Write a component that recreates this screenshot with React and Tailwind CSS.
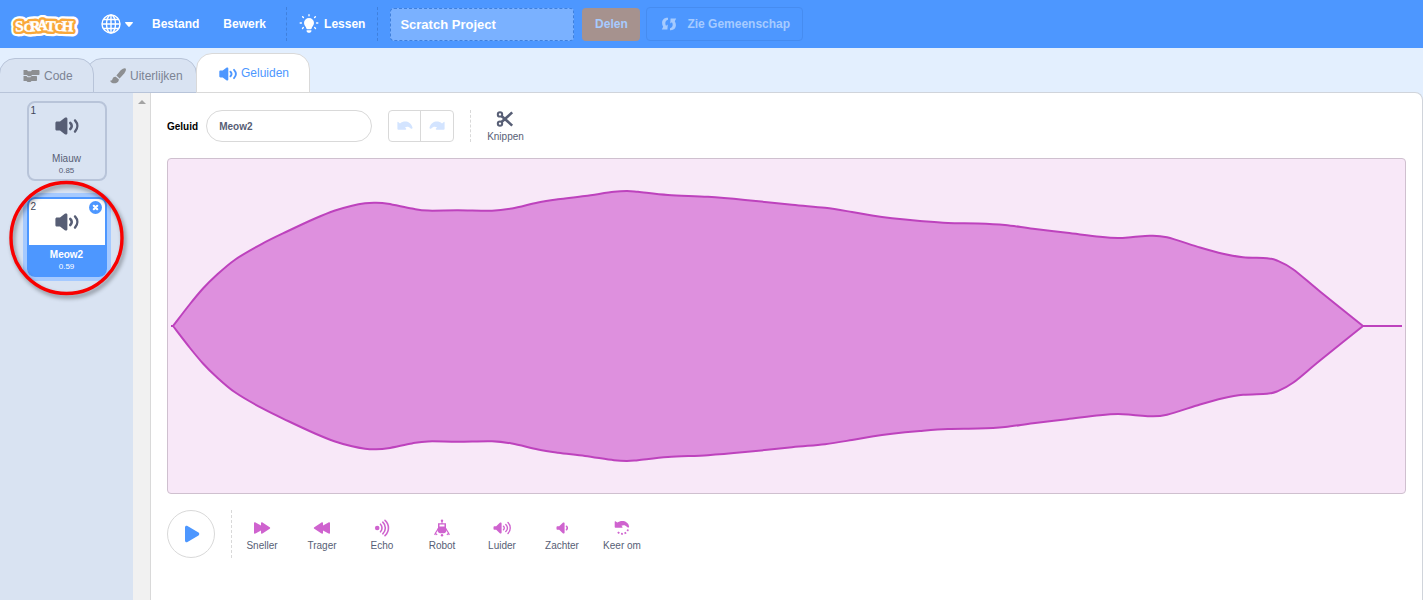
import React from "react";

function Speaker({ className }) {
  return (
    <svg viewBox="0 0 24 18" className={className} fill="currentColor" aria-hidden="true">
      <path d="M2 4.400h3L9.800.8C11 0 12.400.4 12.400 1.800v14.400c0 1.400-1.400 1.800-2.600 1L5 13.600H2c-1 0-1.600-.6-1.600-1.600V6c0-1 .6-1.600 1.600-1.600z" />
      <path d="M15.300 6c1.900 1.800 1.900 4.200 0 6" fill="none" stroke="currentColor" strokeWidth="2.600" strokeLinecap="round" />
      <path d="M20 3.400c3.100 3.400 3.100 7.800 0 11.200" fill="none" stroke="currentColor" strokeWidth="2.400" strokeLinecap="round" />
    </svg>
  );
}

const CONE = "M1.600 5.200h1.600l3.600-3.400C7.500 1.100 8.600 1.400 8.600 2.400v9.200c0 1-1.100 1.300-1.800.6L3.200 8.800H1.600C.9 8.800.5 8.400.5 7.700V6.300c0-.7.4-1.100 1.100-1.100z";

function LouderIcon() {
  return (
    <svg viewBox="0 0 18 14" className="h-3.5 w-[18px]" fill="currentColor" aria-hidden="true">
      <path d={CONE} />
      <path d="M10.500 5.200c1 1 1 2.600 0 3.600M12.800 3.400c2.200 2 2.200 5.200 0 7.200M15 1.600c3 3 3 7.800 0 10.800" fill="none" stroke="currentColor" strokeWidth="1.400" strokeLinecap="round" />
    </svg>
  );
}

function SofterIcon() {
  return (
    <svg viewBox="0 0 12 14" className="h-3.5 w-3" fill="currentColor" aria-hidden="true">
      <path d={CONE} />
      <path d="M10.500 5.300c.9 1 .9 2.400 0 3.400" fill="none" stroke="currentColor" strokeWidth="1.600" strokeLinecap="round" />
    </svg>
  );
}

const logoLetters = [
  ["S", 6.5, 22, 15, -4],
  ["C", 14.5, 21.5, 12, 4],
  ["R", 21, 22, 15, -4],
  ["A", 28.5, 20, 14, 0],
  ["T", 36.5, 21.5, 15, 2],
  ["C", 46, 21.5, 12, -2],
  ["H", 52.5, 21.5, 15, 2],
];

function LogoLayer(props) {
  return (
    <g strokeLinejoin="round" fontFamily="'Liberation Serif', serif" {...props}>
      {logoLetters.map(([letter, x, y, size, angle], i) => (
        <text key={i} x={x} y={y} fontSize={size} transform={`rotate(${angle} ${x} ${y})`}>{letter}</text>
      ))}
    </g>
  );
}

function Logo() {
  return (
    <svg viewBox="0 0 72 34" className="h-[34px] w-[72px]" role="img" aria-label="Scratch">
      <g transform="translate(0 2.500)">
        <LogoLayer fill="#fff" stroke="#fff" strokeWidth="10" />
        <LogoLayer fill="#f9a83a" stroke="#f9a83a" strokeWidth="5.400" />
        <LogoLayer fill="#fff" stroke="#fff" strokeWidth=".5" />
      </g>
    </svg>
  );
}

function Globe() {
  return (
    <svg viewBox="0 0 20 20" className="size-5" fill="none" stroke="#fff" strokeWidth="1.400" aria-hidden="true">
      <circle cx="10" cy="10" r="9" />
      <ellipse cx="10" cy="10" rx="4.500" ry="9" />
      <path d="M10 1v18M1 10h18M2.500 5.500h15M2.500 14.500h15" />
    </svg>
  );
}

function Bulb() {
  return (
    <svg viewBox="0 0 20 20" className="size-5" fill="#fff" aria-hidden="true">
      <path d="M10 4a5 5 0 0 0-5 5c0 2.400 2 3.500 2.400 5.400.1.500.4.8.8.8h3.600c.4 0 .7-.3.8-.8C13 12.500 15 11.400 15 9a5 5 0 0 0-5-5zM7.600 16.200h4.800v.8c0 1-1 1.800-2.400 1.800S7.600 18 7.600 17z" />
      <path d="M10 .8v1M1.200 9h1.200M17.600 9h1.200M3.600 2.800l.8.800M16.400 2.800l-.8.800M3.500 14.400l.8-.8M16.500 14.400l-.8-.8" stroke="#fff" strokeWidth="1.400" strokeLinecap="round" />
    </svg>
  );
}

function CommunityIcon() {
  return (
    <svg viewBox="0 0 16 14" className="h-3.5 w-4" fill="currentColor" aria-hidden="true">
      <path d="M7 .8C2 .2-.5 5 2.200 9.800L.8 12.600h5.600l.4-5-1.800 1.200C3.600 6.400 4.400 3.400 7 2.800z" />
      <path d="M9 13.200c5 .6 7.500-4.200 4.800-9L15.200 1.400H9.600l-.4 5L11 5.200c1.400 2.400.6 5.400-2 6z" />
    </svg>
  );
}

function CodeIcon() {
  return (
    <svg viewBox="0 0 17 13" className="h-[13px] w-[17px]" fill="#8d8f92" aria-hidden="true">
      <path d="M.5 1h3.500l1 1.200h3L9 1h6.500c.6 0 1 .4 1 1v3c0 .6-.4 1-1 1H9L8 7.200H5L4 6H.5zM.5 7h3l1 1.200h3L8.500 7H13c.6 0 1 .4 1 1v3c0 .6-.4 1-1 1H8.500l-1 1h-3l-1-1h-3z" />
    </svg>
  );
}

function BrushIcon() {
  return (
    <svg viewBox="0 0 16 16" className="size-4" fill="#8d8f92" aria-hidden="true">
      <path d="M15.500.5c-.9-.7-2.800.1-4.800 1.800L6.400 7.600l3.200 3 4.800-5.400c1.500-2 2-4 1.100-4.700zM5.700 8.700c-1.500-.2-2.700.6-3.100 2-.3 1.100-1 2.100-2.600 2 .9 2 3.200 3 5.400 2.500 2.200-.4 3.600-2 3.400-3.900z" />
    </svg>
  );
}

function UndoIcon({ flip }) {
  return (
    <svg viewBox="0 0 16 10" className={flip ? "h-2.5 w-4 -scale-x-100" : "h-2.5 w-4"} fill="#d3e4ff" aria-hidden="true">
      <path d="M1.200 1l1.800 1.400C7-.7 13.500 0 15.500 6.400c.3 1-1 1.800-1.800 1C12 5.600 10 5.300 8 6.300l1 1.200c.5.500.2 1.200-.5 1.200H1.400C.8 8.700.4 8.400.4 7.800V1.500C.4.900.8.700 1.200 1z" />
    </svg>
  );
}

function ScissorsIcon() {
  return (
    <svg viewBox="0 0 18 18" className="size-[18px]" fill="none" stroke="#575e75" aria-hidden="true">
      <circle cx="4" cy="4.400" r="2.200" strokeWidth="2" />
      <circle cx="4" cy="13.600" r="2.200" strokeWidth="2" />
      <path d="M5.800 6.200l10.400 9.400M5.800 11.800L16.200 2.400" strokeWidth="2.600" />
    </svg>
  );
}

function FasterIcon({ flip }) {
  return (
    <svg viewBox="0 0 18 18" className={flip ? "size-[18px] -scale-x-100" : "size-[18px]"} fill="currentColor" aria-hidden="true">
      <path d="M1 4.200c0-.8.800-1.200 1.500-.8L8 6.600V4.200c0-.8.800-1.200 1.500-.8l7.200 4.800c.6.400.6 1.200 0 1.600l-7.200 4.800c-.7.400-1.500 0-1.500-.8v-2.400l-5.500 3.200c-.7.400-1.500 0-1.500-.8z" />
    </svg>
  );
}

function EchoIcon() {
  return (
    <svg viewBox="0 0 18 18" className="size-[18px]" fill="none" stroke="currentColor" strokeWidth="1.600" strokeLinecap="round" aria-hidden="true">
      <circle cx="4.200" cy="9" r="2.300" fill="currentColor" stroke="none" />
      <path d="M7.500 5.200c2 2 2 5.600 0 7.600M9.800 3.200c3.400 3.200 3.400 8.400 0 11.600M12 1.400c4.600 4.200 4.600 11 0 15.200" />
    </svg>
  );
}

function RobotIcon() {
  return (
    <svg viewBox="0 0 18 18" className="size-[18px]" fill="currentColor" aria-hidden="true">
      <circle cx="9" cy="1.700" r="1.200" />
      <path d="M8.500 2h1v3h-1zM5 4.200h8V9H5zM6.500 5.600v1.800h5V5.600zM6 8.600h6c1 0 1.600.8 1.600 1.800 0 2.200-1.300 3.900-2.900 3.900H7.300c-1.600 0-2.900-1.700-2.900-3.900 0-1 .6-1.800 1.600-1.800z" />
      <path d="M5 10l-2.500 4M13 10l2.500 4M2.500 14l-.8 2M2.500 14l1.600 2M15.500 14l.8 2M15.500 14l-1.600 2" fill="none" stroke="currentColor" strokeWidth="1.200" />
      <circle cx="9" cy="16.300" r="1.200" />
    </svg>
  );
}

function ReverseIcon() {
  return (
    <svg viewBox="0 0 18 18" className="size-[18px]" fill="currentColor" aria-hidden="true">
      <path d="M2.500 2.300l1.700 1.300C8.500.4 15.300 2 16.100 7.400c.2 1.200-1.500 1.600-2.100.7-1.400-2-3.800-2.400-5.600-1.300l.9 1c.4.500.2 1-.4 1H2.500c-.5 0-.8-.3-.8-.8V2.700c0-.5.400-.7.800-.4z" />
      <path d="M15 10.500a6 5.600 0 0 1-11.200 1.200" fill="none" stroke="currentColor" strokeWidth="1.800" strokeDasharray="1.800 1.700" />
    </svg>
  );
}

/* Outline of the sound: x position and y of the upper edge; the lower edge mirrors it. */
const MIDDLE = 326;
const upperEdge = [
  [173, 326], [190, 304], [203, 288.5], [215, 276.5], [235, 259.7], [262, 243.8], [288, 231], [315, 218.5],
  [335, 210.5], [352, 205.7], [365, 203.3], [375, 202.7], [388, 203.7], [412, 208.6], [428, 210.6],
  [458, 210.3], [492, 210.8], [512, 208.5], [538, 202.5], [558, 199.3], [585, 196], [614, 191.8], [627, 191],
  [638, 191.8], [668, 195], [708, 196.8], [745, 199.9], [792, 204.8], [825, 207.8], [852, 212], [872, 215.6],
  [892, 218.3], [920, 221], [948, 223], [978, 223.4], [1005, 225], [1033, 228.8], [1067, 232.8], [1100, 236.8],
  [1118, 238], [1133, 237], [1150, 235.7], [1167, 237.3], [1200, 247.5], [1223, 253.7], [1243, 257.2],
  [1267, 258.3], [1277, 260.5], [1293, 269.2], [1320, 291.5], [1363, 326],
];

function smooth(points) {
  return points
    .slice(0, -1)
    .map((p, i) => {
      const a = points[i - 1] || p;
      const n = points[i + 1];
      const b = points[i + 2] || n;
      const k = 1 / 6;
      return `C${p[0] + (n[0] - a[0]) * k} ${p[1] + (n[1] - a[1]) * k} ${n[0] - (b[0] - p[0]) * k} ${n[1] - (b[1] - p[1]) * k} ${n[0]} ${n[1]}`;
    })
    .join("");
}

function Waveform() {
  const lowerEdge = upperEdge.map(([x, y]) => [x, 2 * MIDDLE - y]).reverse();
  return (
    <svg viewBox="168 159 1237 334" preserveAspectRatio="none" className="block h-[334px] w-full" role="img" aria-label="Golfvorm">
      <path d={`M173 326${smooth(upperEdge)}${smooth(lowerEdge)}Z`} fill="#de90de" stroke="#bd42bd" strokeWidth="2" strokeLinejoin="round" />
      <path d="M171 326h2M1363 326h39" stroke="#bd42bd" strokeWidth="2" />
    </svg>
  );
}

function Tab({ active, icon, children }) {
  return (
    <button
      type="button"
      role="tab"
      aria-selected={!!active}
      className={
        active
          ? "relative z-10 -ml-px flex h-10 w-[114px] items-center gap-1 rounded-t-[16px] border border-[#d9d9d9] bg-white pl-[22px] text-[12px] text-[#4d97ff]"
          : "flex h-[35px] items-center gap-1 rounded-t-[16px] border border-[#b8c4d9] bg-[#d9e3f2] text-[12px] text-[#7c8394] first:relative first:z-10 first:-ml-px first:w-[95px] first:pl-[23px] nth-2:-ml-2 nth-2:w-[111px] nth-2:pl-[23px]"
      }
    >
      {icon}
      {children}
    </button>
  );
}

function SoundTile({ number, name, length, selected }) {
  return (
    <button
      type="button"
      className={
        selected
          ? "relative flex h-20 w-20 flex-col items-center overflow-hidden rounded-lg border-2 border-[#4d97ff] bg-[#4d97ff] text-white"
          : "relative flex h-20 w-20 flex-col items-center overflow-hidden rounded-lg border-2 border-[#b8c4d9] text-[#575e75]"
      }
    >
      <span className={selected ? "flex h-[46px] w-full items-center justify-center bg-white text-[#575e75]" : "flex h-[46px] w-full items-center justify-center"}>
        <Speaker className="h-[18px] w-6" />
      </span>
      <span className="absolute top-[2px] left-[2px] text-[10px] leading-3 text-[#3f4559]">{number}</span>
      <span className={selected ? "mt-1 text-[10px] leading-3 font-bold" : "mt-1 text-[10px] leading-3"}>{name}</span>
      <span className="text-[8px] leading-3">{length}</span>
    </button>
  );
}

const effects = [
  ["Sneller", <FasterIcon />],
  ["Trager", <FasterIcon flip />],
  ["Echo", <EchoIcon />],
  ["Robot", <RobotIcon />],
  ["Luider", <LouderIcon />],
  ["Zachter", <SofterIcon />],
  ["Keer om", <ReverseIcon />],
];

export default function App() {
  return (
    <div className="flex min-h-screen flex-col bg-[#e3effe] font-['Liberation_Sans',Arial,sans-serif] text-[#575e75]">
      <header className="flex h-12 items-center bg-[#4d97ff] text-[12px] font-bold text-white">
        <a href="#home" className="ml-[9px]"><Logo /></a>
        <button type="button" aria-label="Taal" className="ml-5 flex items-center gap-1">
          <Globe />
          <svg viewBox="0 0 8 5" className="h-[5px] w-2" fill="#fff" aria-hidden="true"><path d="M.8 0h6.400c.8 0 1 .6.6 1.100L4.700 4.600c-.4.500-1 .500-1.400 0L.2 1.100C-.2.600 0 0 .8 0z" /></svg>
        </button>
        <button type="button" className="ml-[19px]">Bestand</button>
        <button type="button" className="ml-6">Bewerk</button>
        <div className="ml-5 flex h-[34px] items-center border-x border-dashed border-[#3f80dd] px-3">
          <button type="button" className="flex items-center gap-[5px]"><Bulb />Lessen</button>
        </div>
        <input
          aria-label="Projectnaam"
          defaultValue="Scratch Project"
          className="ml-3 h-[33px] w-[184px] rounded border border-dashed border-[#3f80dd] bg-[#7ab1ff] px-[9px] text-[13px] font-bold text-white outline-none"
        />
        <button type="button" className="ml-2 h-[33px] w-[58px] rounded bg-[#a6928e] text-[#a6cbff]">Delen</button>
        <button type="button" className="ml-[6px] flex h-[34px] w-[157px] items-center gap-[10px] rounded border border-[#468cf0] pl-[14px] text-[#a6cbff]">
          <CommunityIcon />Zie Gemeenschap
        </button>
      </header>

      <div role="tablist" className="relative z-10 -mb-px flex h-[45px] items-end">
        <Tab icon={<CodeIcon />}>Code</Tab>
        <Tab icon={<BrushIcon />}>Uiterlijken</Tab>
        <Tab active icon={<Speaker className="mt-px h-3.5 w-[18px]" />}>Geluiden</Tab>
      </div>

      <div className="flex flex-1 rounded-tr-lg border-t border-r border-[#d0d4db] bg-white">
        <aside className="relative flex w-[133px] flex-col items-center gap-4 bg-[#d9e3f2] pt-2">
          <SoundTile number="1" name="Miauw" length="0.85" />
          <div className="relative rounded-lg shadow-[0_0_0_4px_#a6caff]">
            <SoundTile number="2" name="Meow2" length="0.59" selected />
            <button type="button" aria-label="Verwijderen" className="absolute top-1 right-[5px] size-[13px] rounded-full bg-[#4d97ff]">
              <svg viewBox="0 0 13 13" className="size-[13px]" aria-hidden="true"><path d="M4.800 4.800l3.400 3.400M8.200 4.800L4.800 8.200" stroke="#fff" strokeWidth="2.200" strokeLinecap="round" /></svg>
            </button>
          </div>
          <svg viewBox="0 0 124 124" className="pointer-events-none absolute top-[86px] left-[6px] size-[124px] drop-shadow-[2px_3px_2px_#0006]" aria-hidden="true">
            <circle cx="60.500" cy="59" r="55.500" fill="none" stroke="#f80000" strokeWidth="3.400" />
          </svg>
        </aside>
        <div className="flex w-[17px] justify-center bg-[#f1f1f1] pt-[7px]">
          <svg viewBox="0 0 8 4" className="h-1 w-2" fill="#a3a3a3" aria-hidden="true"><path d="M4 0l4 4H0z" /></svg>
        </div>

        <main className="min-w-0 flex-1 border-l border-[#d9d9d9] px-4 pt-[17px]">
          <div className="flex h-8 items-center">
            <label htmlFor="sound-name" className="text-[10px] font-bold text-black">Geluid</label>
            <input id="sound-name" defaultValue="Meow2" className="ml-2 h-8 w-[166px] rounded-full border border-[#d9d9d9] px-3 text-[10px] font-bold text-[#575e75] outline-none" />
            <div className="ml-4 flex h-8 w-[66px] rounded border border-[#d9d9d9]">
              <button type="button" aria-label="Ongedaan maken" className="flex w-8 items-center justify-center border-r border-[#d9d9d9]"><UndoIcon /></button>
              <button type="button" aria-label="Opnieuw" className="flex w-8 items-center justify-center"><UndoIcon flip /></button>
            </div>
            <div className="ml-4 flex h-8 items-center border-l border-dashed border-[#d9d9d9] pl-4">
              <button type="button" className="flex flex-col items-center gap-[3px] text-[10px] leading-3"><ScissorsIcon />Knippen</button>
            </div>
          </div>

          <div className="mt-4 overflow-hidden rounded border border-[#cfc0cf] bg-[#f8e8f8]">
            <Waveform />
          </div>

          <div className="mt-4 flex h-12 items-center">
            <button type="button" aria-label="Afspelen" className="flex size-12 items-center justify-center rounded-full border border-[#d9d9d9]">
              <svg viewBox="0 0 16 18" className="ml-[2px] h-[18px] w-4" fill="#4d97ff" aria-hidden="true"><path d="M1 2.500C1 1 2.300.300 3.500 1l11 6.600c1 .6 1 2.200 0 2.800l-11 6.600C2.300 17.700 1 17 1 15.500z" /></svg>
            </button>
            <div className="ml-4 flex h-12 items-center border-l border-dashed border-[#d9d9d9] pt-[6px]">
              {effects.map(([name, icon]) => (
                <button key={name} type="button" className="flex w-[60px] flex-col items-center text-[10px] leading-[18px] whitespace-nowrap">
                  <span className="flex h-[18px] items-center text-[#cf63cf]">{icon}</span>
                  {name}
                </button>
              ))}
            </div>
          </div>
        </main>
      </div>
    </div>
  );
}
